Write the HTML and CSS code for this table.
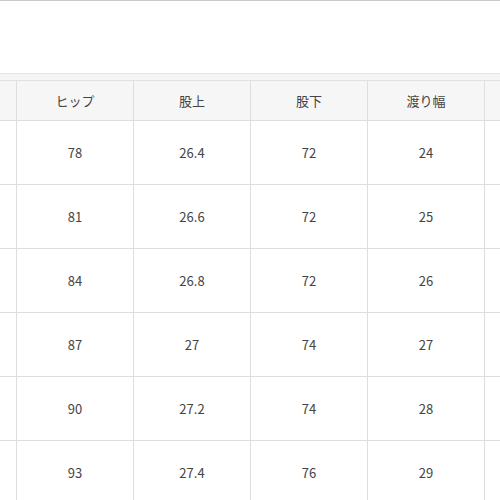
FILE: index.html
```html
<!DOCTYPE html>
<html lang="ja">
<head>
<meta charset="utf-8">
<link rel="stylesheet" href="styles.css">
</head>
<body>
<div class="top">
  <span class="edge">(</span>
</div>
<div class="gap"></div>
<div class="wrap">
  <div class="grid">
    <div class="cell head"></div><div class="cell head">ヒップ</div><div class="cell head">股上</div><div class="cell head">股下</div><div class="cell head">渡り幅</div><div class="cell head"></div>
    <div class="cell"></div><div class="cell">78</div><div class="cell">26.4</div><div class="cell">72</div><div class="cell">24</div><div class="cell"></div>
    <div class="cell"></div><div class="cell">81</div><div class="cell">26.6</div><div class="cell">72</div><div class="cell">25</div><div class="cell"></div>
    <div class="cell"></div><div class="cell">84</div><div class="cell">26.8</div><div class="cell">72</div><div class="cell">26</div><div class="cell"></div>
    <div class="cell"></div><div class="cell">87</div><div class="cell">27</div><div class="cell">74</div><div class="cell">27</div><div class="cell"></div>
    <div class="cell"></div><div class="cell">90</div><div class="cell">27.2</div><div class="cell">74</div><div class="cell">28</div><div class="cell"></div>
    <div class="cell"></div><div class="cell">93</div><div class="cell">27.4</div><div class="cell">76</div><div class="cell">29</div><div class="cell"></div>
  </div>
</div>
</body>
</html>
```
FILE: styles.css
```css
html, body {
  margin: 0;
  padding: 0;
  background: #ffffff;
  width: 500px;
  height: 500px;
  overflow: hidden;
  font-family: "Noto Sans CJK JP", "Noto Sans", sans-serif;
  color: #444;
}
.top {
  box-sizing: border-box;
  height: 74px;
  border-top: 1px solid #c9c9c9;
  border-bottom: 1px solid #e4e4e4;
  background: #fff;
  display: flex;
  justify-content: flex-end;
  align-items: flex-start;
}
.edge {
  font-size: 13px;
  line-height: 13px;
  color: #555;
  margin-top: 20px;
  margin-right: -4px;
}
.gap {
  height: 6px;
  background: #f5f5f5;
}
.wrap {
  width: 500px;
  overflow: hidden;
}
.grid {
  display: grid;
  grid-template-columns: 17px repeat(5, 117px);
  grid-auto-rows: 64px;
  grid-template-rows: 40px;
  width: 602px;
  border-top: 1px solid #e0e0e0;
}
.cell {
  box-sizing: border-box;
  border-right: 1px solid #dedede;
  border-bottom: 1px solid #dedede;
  display: flex;
  align-items: center;
  justify-content: center;
  font-size: 13px;
  color: #444;
  background: #fff;
  white-space: nowrap;
}
.head {
  background: #f6f6f6;
  padding-bottom: 1px;
}
```
